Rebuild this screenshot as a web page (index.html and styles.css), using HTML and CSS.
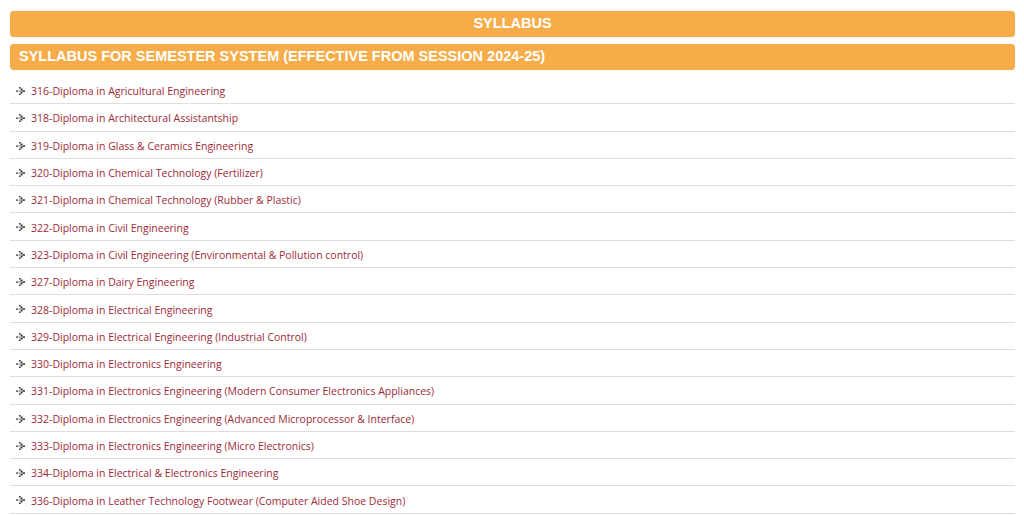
FILE: index.html
```html
<!DOCTYPE html>
<html lang="en">
<head>
  <meta charset="UTF-8" />
  <title>Syllabus</title>
  <link rel="stylesheet" href="styles.css">
</head>
<body>
  <div class="page">
    <h2 class="bar bar-center">SYLLABUS</h2>
    <h3 class="bar">SYLLABUS FOR SEMESTER SYSTEM (EFFECTIVE FROM SESSION 2024-25)</h3>
    <ul class="course-list">
      <li><a href="#">316-Diploma in Agricultural Engineering</a></li>
      <li><a href="#">318-Diploma in Architectural Assistantship</a></li>
      <li><a href="#">319-Diploma in Glass &amp; Ceramics Engineering</a></li>
      <li><a href="#">320-Diploma in Chemical Technology (Fertilizer)</a></li>
      <li><a href="#">321-Diploma in Chemical Technology (Rubber &amp; Plastic)</a></li>
      <li><a href="#">322-Diploma in Civil Engineering</a></li>
      <li><a href="#">323-Diploma in Civil Engineering (Environmental &amp; Pollution control)</a></li>
      <li><a href="#">327-Diploma in Dairy Engineering</a></li>
      <li><a href="#">328-Diploma in Electrical Engineering</a></li>
      <li><a href="#">329-Diploma in Electrical Engineering (Industrial Control)</a></li>
      <li><a href="#">330-Diploma in Electronics Engineering</a></li>
      <li><a href="#">331-Diploma in Electronics Engineering (Modern Consumer Electronics Appliances)</a></li>
      <li><a href="#">332-Diploma in Electronics Engineering (Advanced Microprocessor &amp; Interface)</a></li>
      <li><a href="#">333-Diploma in Electronics Engineering (Micro Electronics)</a></li>
      <li><a href="#">334-Diploma in Electrical &amp; Electronics Engineering</a></li>
      <li><a href="#">336-Diploma in Leather Technology Footwear (Computer Aided Shoe Design)</a></li>
    </ul>
  </div>
</body>
</html>
```

FILE: styles.css
```css
* {
  box-sizing: border-box;
  margin: 0;
  padding: 0;
}

body {
  background-color: #fff;
  font-family: 'Open Sans', sans-serif;
  overflow: hidden;
}

.page {
  padding: 11px 9px 0 10px;
}

.bar {
  background-color: #f7ac4a;
  color: #fff;
  font-family: 'Liberation Sans', Arial, sans-serif;
  font-weight: bold;
  font-size: 14.5px;
  height: 26px;
  line-height: 24px;
  padding: 0 9px;
  border-radius: 4px;
  margin-bottom: 7px;
  box-shadow: 0 0 1px rgba(0,0,0,0.15);
}

.bar-center {
  text-align: center;
}

.course-list {
  list-style: none;
}

.course-list li {
  display: flex;
  align-items: center;
  height: 27.3px;
  padding: 2px 0 0 21px;
  border-bottom: 1px solid #dedede;
  background: url("data:image/svg+xml,%3Csvg xmlns='http://www.w3.org/2000/svg' width='10' height='10' viewBox='0 0 10 10'%3E%3Cg fill='%23333'%3E%3Crect x='0' y='4.5' width='2' height='1.2'/%3E%3Crect x='3' y='1' width='1.5' height='1.5'/%3E%3Crect x='4.5' y='2.5' width='2' height='2'/%3E%3Crect x='6.5' y='4.3' width='2.5' height='1.5'/%3E%3Crect x='4.5' y='5.5' width='2' height='2'/%3E%3Crect x='3' y='7.5' width='1.5' height='1.5'/%3E%3Crect x='2.5' y='4.5' width='2' height='1.2' fill='%23888'/%3E%3C/g%3E%3C/svg%3E") no-repeat 6px 55%;
}

.course-list a {
  color: #9e2a37;
  text-decoration: none;
  font-size: 10.5px;
}
```
